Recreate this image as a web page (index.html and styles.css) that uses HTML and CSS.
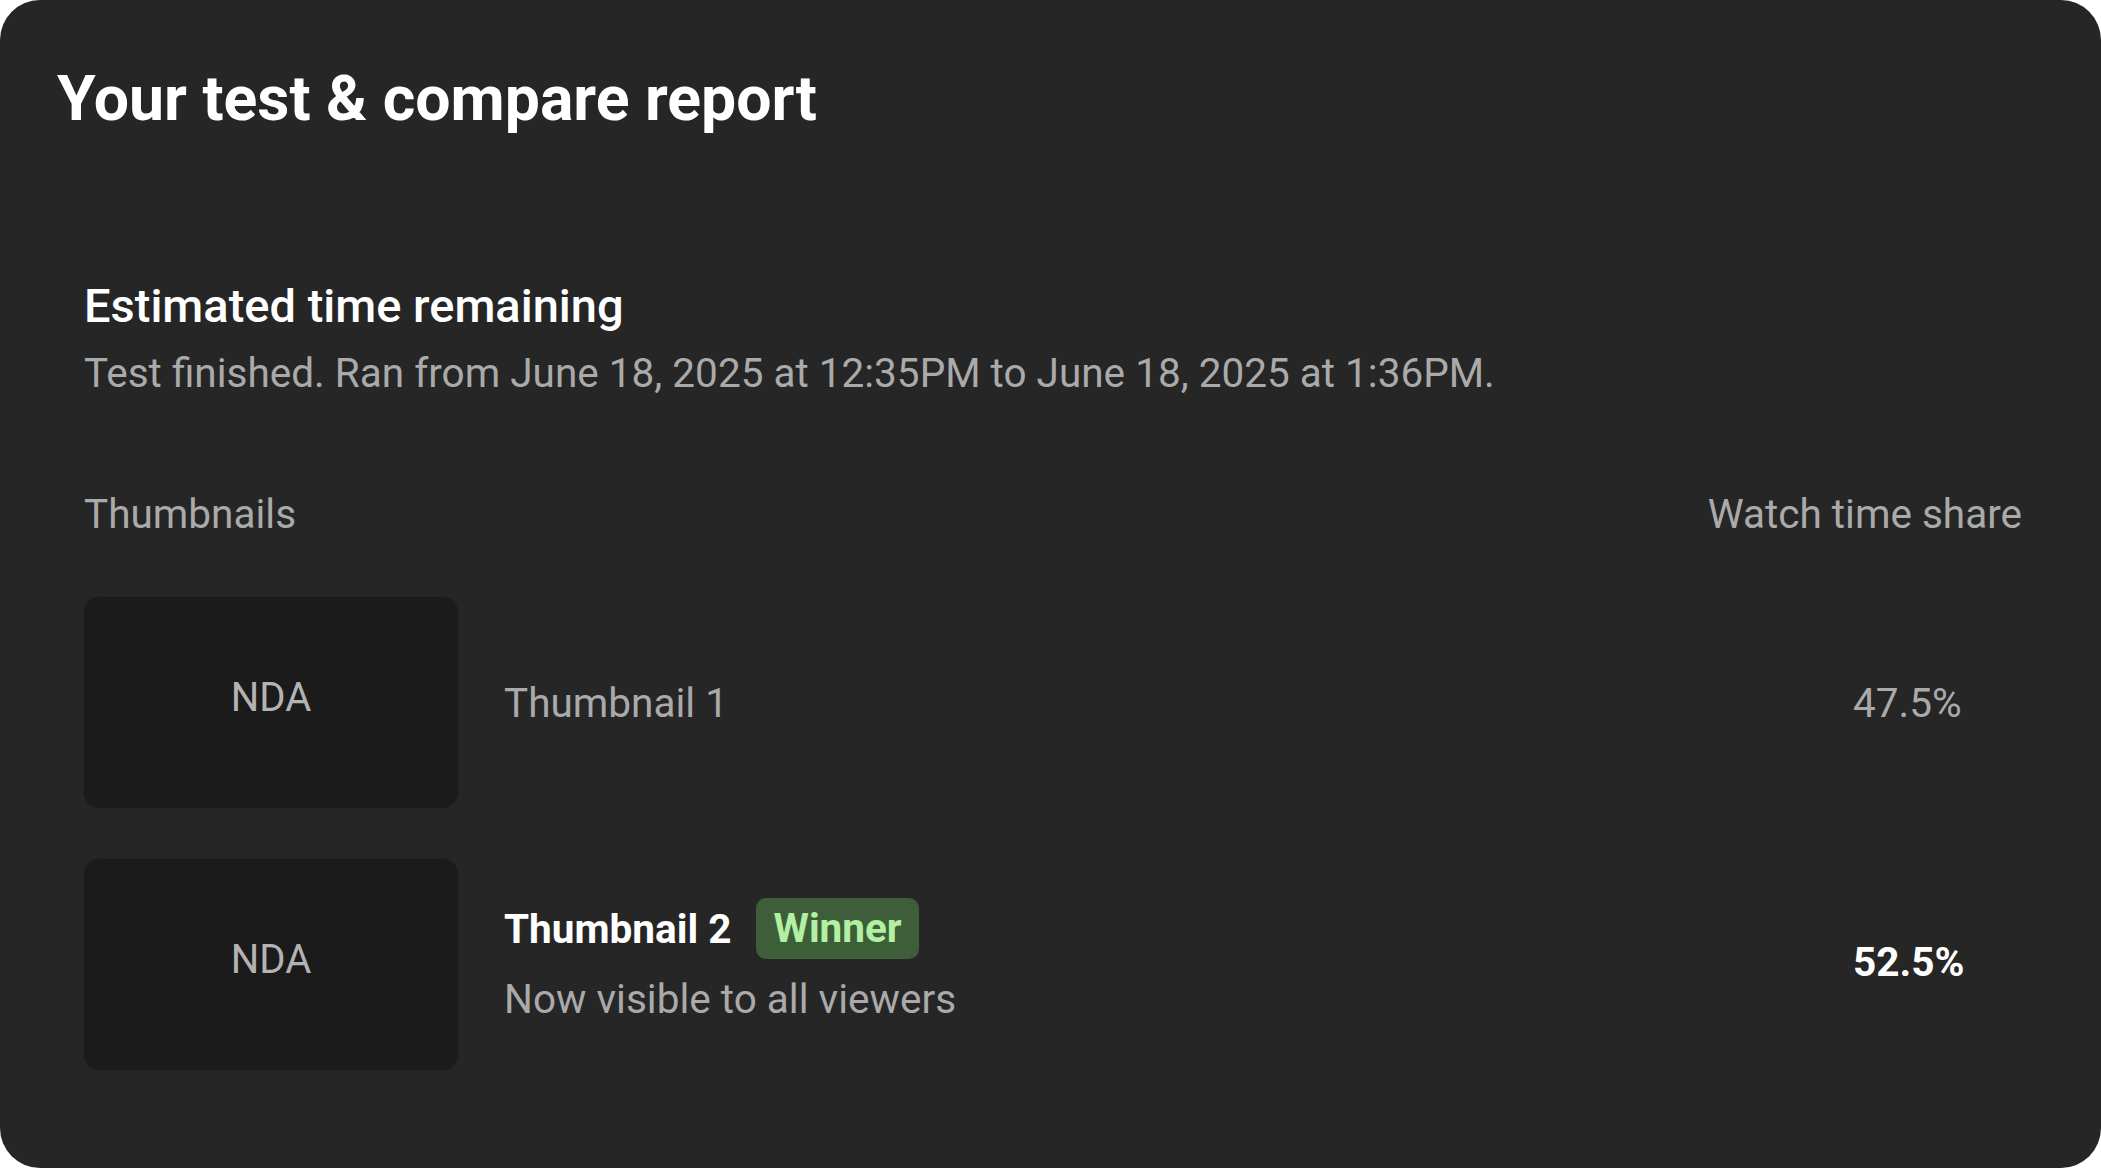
FILE: index.html
```html
<!DOCTYPE html>
<html lang="en">
<head>
    <meta charset="UTF-8">
    <meta name="viewport" content="width=device-width, initial-scale=1.0">
    <title>Your test &amp; compare report</title>
    <link rel="stylesheet" href="styles.css">
</head>
<body>
    <div class="card">
        <h1 class="card-title">Your test &amp; compare report</h1>
        <div class="report">
            <h2 class="report-heading">Estimated time remaining</h2>
            <p class="report-sub">Test finished. Ran from June 18, 2025 at 12:35PM to June 18, 2025 at 1:36PM.</p>

            <div class="table-head">
                <span>Thumbnails</span>
                <span>Watch time share</span>
            </div>

            <div class="rows">
                <div class="row">
                    <div class="thumb">NDA</div>
                    <div class="info">
                        <div class="info-title">
                            <span class="name">Thumbnail 1</span>
                        </div>
                    </div>
                    <div class="share">47.5%</div>
                </div>
                <div class="row winner">
                    <div class="thumb">NDA</div>
                    <div class="info">
                        <div class="info-title">
                            <span class="name">Thumbnail 2</span>
                            <span class="badge">Winner</span>
                        </div>
                        <div class="info-sub">Now visible to all viewers</div>
                    </div>
                    <div class="share">52.5%</div>
                </div>
            </div>
        </div>
    </div>
</body>
</html>
```

FILE: styles.css
```css
html, body {
    margin: 0;
    padding: 0;
    background: #ffffff;
}
body {
    font-family: Roboto, "Liberation Sans", Arial, sans-serif;
    color: #aaaaaa;
}
.card {
    box-sizing: border-box;
    width: 100vw;
    height: 100vh;
    background: #262626;
    border-radius: 40px;
    padding: 62px 57px 0 57px;
    overflow: hidden;
}
.card-title {
    margin: 0;
    font-size: 62.5px;
    line-height: 74px;
    font-weight: 700;
    color: #ffffff;
}
.report {
    margin-top: 142px;
    padding: 0 22px 0 27px;
}
.report-heading {
    margin: 0;
    font-size: 47px;
    line-height: 56px;
    font-weight: 500;
    color: #ffffff;
}
.report-sub {
    margin: 15px 0 0 0;
    font-size: 40.5px;
    line-height: 48px;
}
.table-head {
    margin-top: 93px;
    display: flex;
    justify-content: space-between;
    font-size: 40.5px;
    line-height: 48px;
}
.rows {
    margin-top: 59px;
    display: flex;
    flex-direction: column;
    gap: 51px;
}
.row {
    display: flex;
    align-items: center;
}
.thumb {
    box-sizing: border-box;
    flex: none;
    width: 374px;
    height: 211px;
    padding-bottom: 10px;
    background: #1b1b1b;
    border-radius: 16px;
    box-shadow: 0 0 0 1px #232323;
    display: flex;
    align-items: center;
    justify-content: center;
    font-size: 40px;
    color: #b3b3b3;
}
.info {
    flex: 1;
    padding-left: 46px;
    font-size: 40.5px;
    line-height: 48px;
}
.winner .info {
    margin-bottom: 8px;
}
.info-title {
    display: flex;
    align-items: center;
    gap: 25px;
}
.winner .name {
    font-weight: 700;
    color: #ffffff;
}
.badge {
    background: #3e5e3a;
    color: #b2f0a2;
    font-weight: 700;
    border-radius: 10px;
    padding: 6px 17px 7px 17px;
}
.info-sub {
    margin-top: 16px;
}
.share {
    flex: none;
    width: 169px;
    font-size: 40.5px;
    line-height: 48px;
}
.winner .share {
    margin-bottom: 6px;
    font-weight: 700;
    color: #ffffff;
}
```
